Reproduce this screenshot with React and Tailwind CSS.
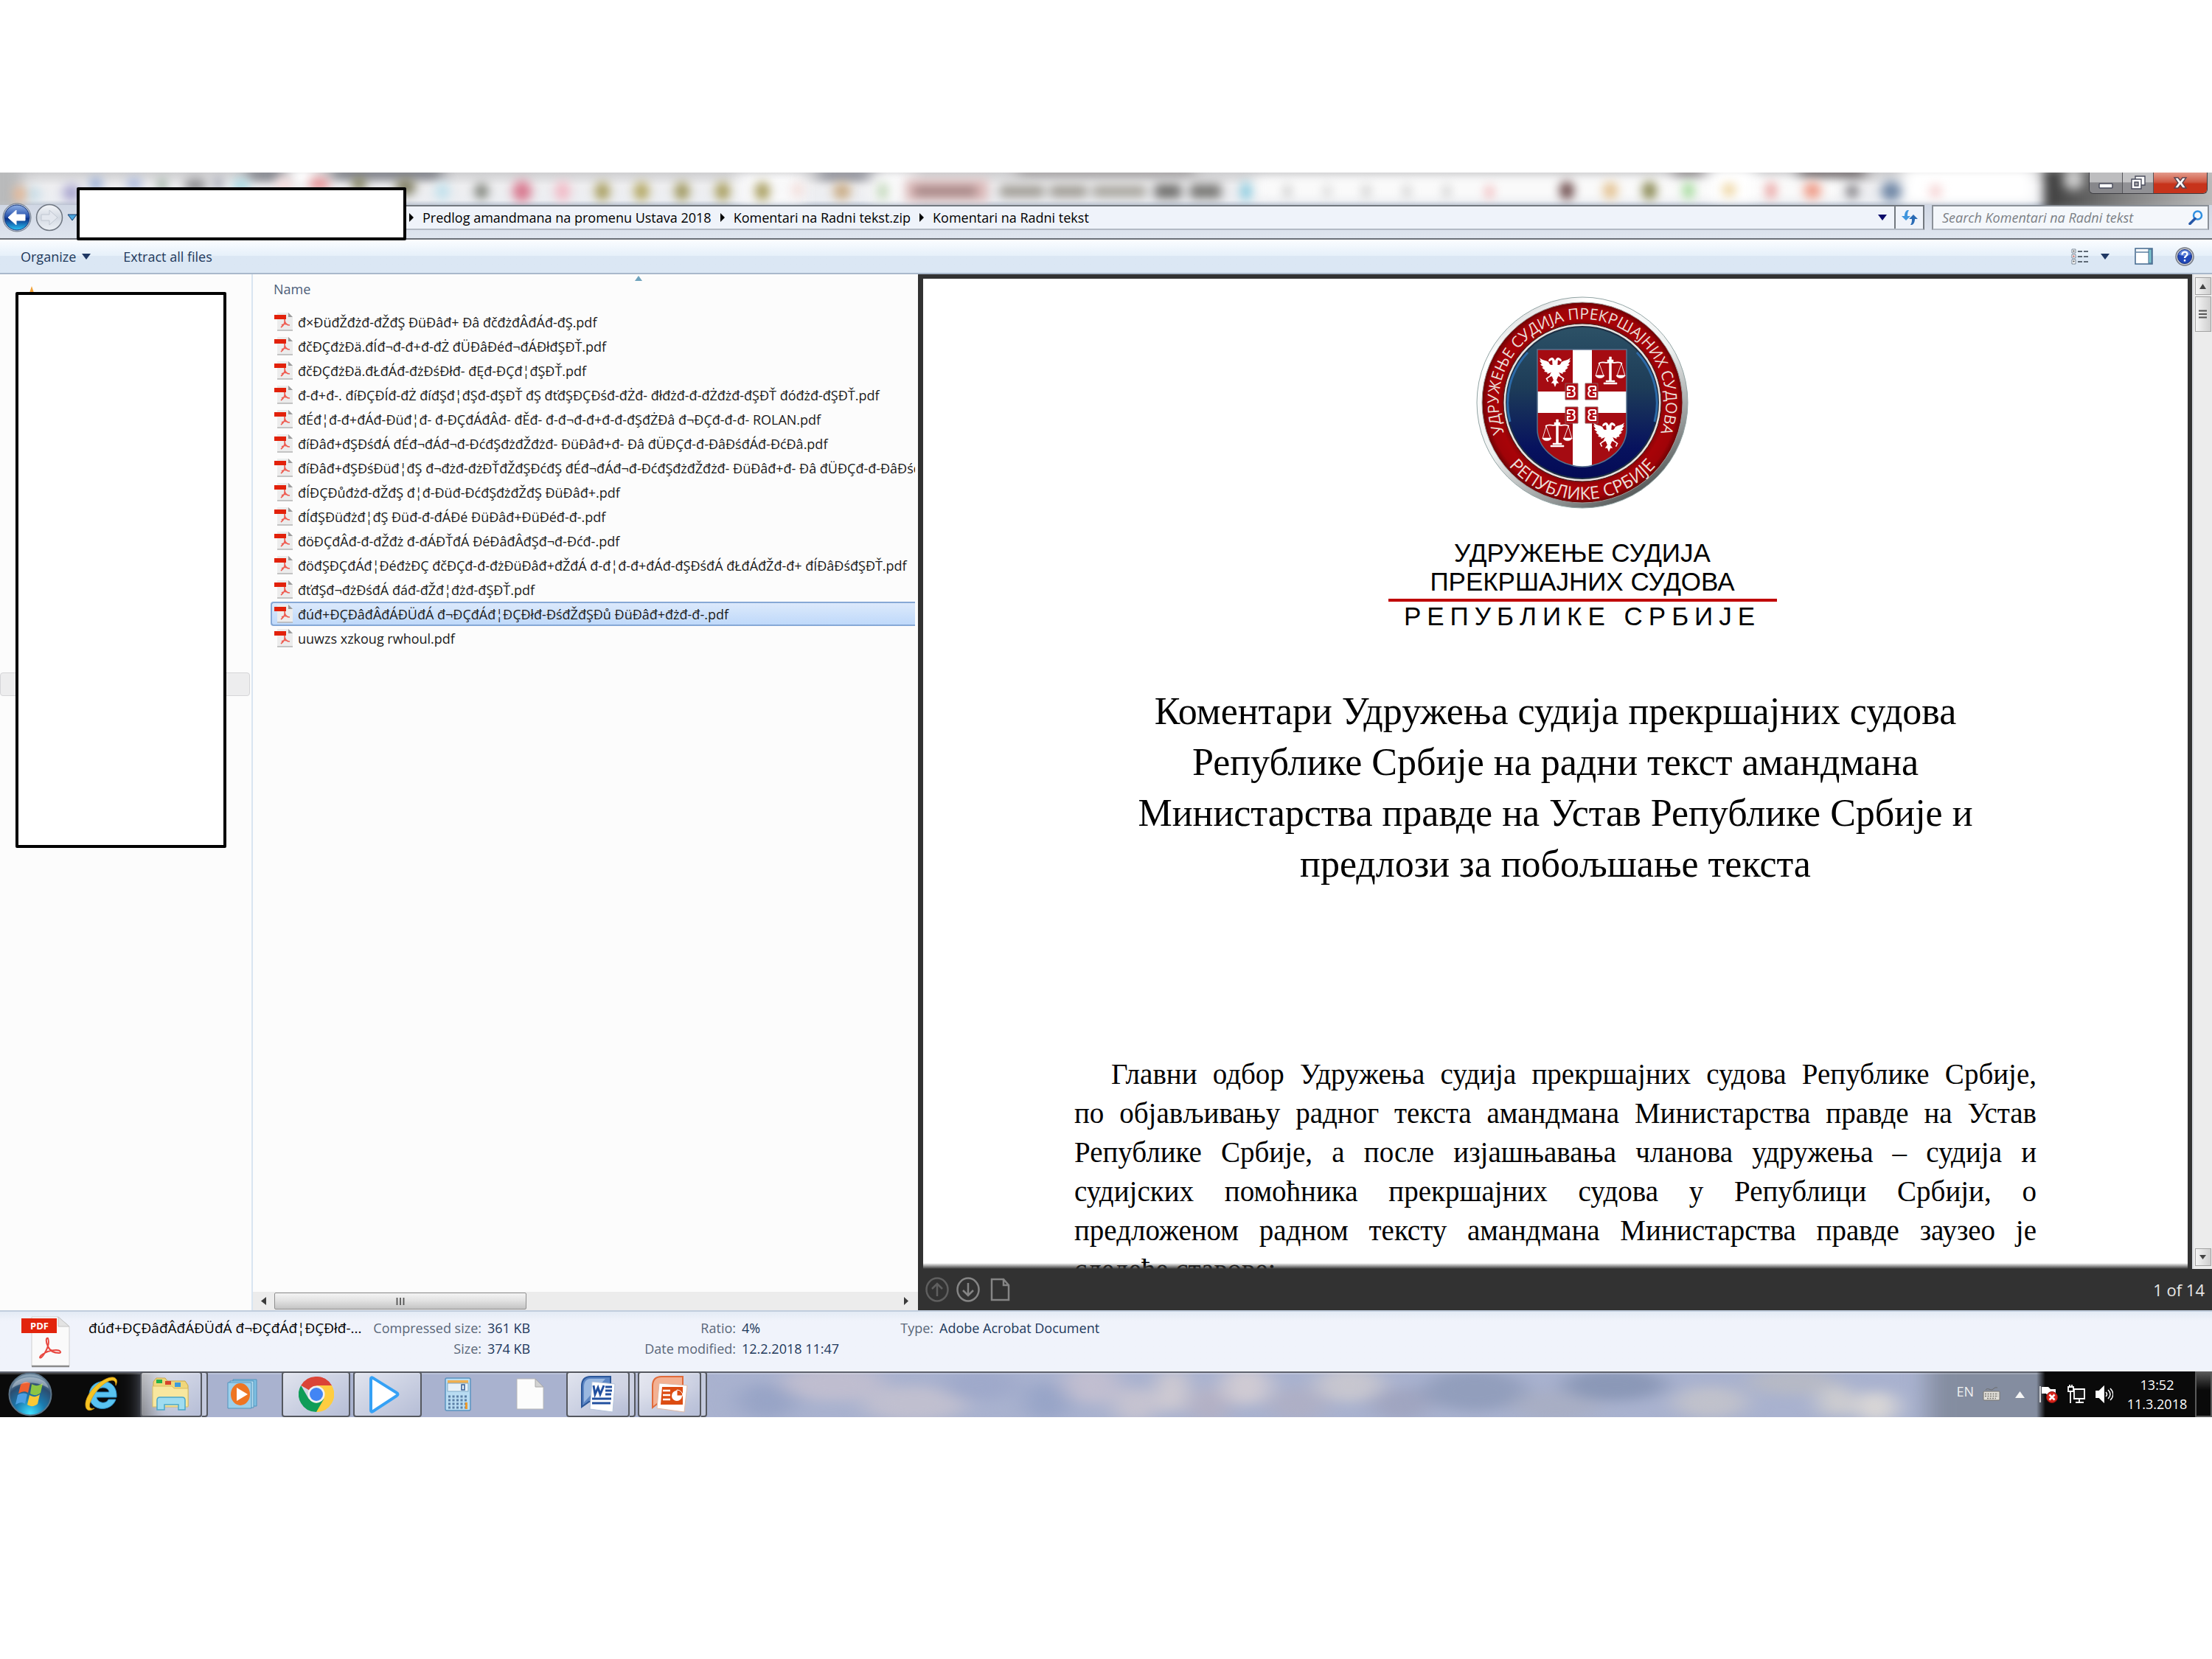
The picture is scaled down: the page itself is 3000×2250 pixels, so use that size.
import { useState } from 'react';

const files = [
  'đ×ĐüđŽđżđ-đŽđŞ ĐüĐâđ+ Đâ đčđżđÂđÁđ-đŞ.pdf',
  'đčĐÇđżĐä.đÍđ¬đ-đ+đ-đŻ đÜĐâĐéđ¬đÁĐłđŞĐŤ.pdf',
  'đčĐÇđżĐä.đŁđÁđ-đżĐśĐłđ- đĘđ-ĐÇđ¦đŞĐŤ.pdf',
  'đ-đ+đ-. đíĐÇĐÍđ-đŻ đíđŞđ¦đŞđ-đŞĐŤ đŞ đťđŞĐÇĐśđ-đŻđ- đłđżđ-đ-đŻđżđ-đŞĐŤ đóđżđ-đŞĐŤ.pdf',
  'đÉđ¦đ-đ+đÁđ-Đüđ¦đ- đ-ĐÇđÁđÂđ- đĚđ- đ-đ¬đ-đ+đ-đ-đŞđŻĐâ đ¬ĐÇđ-đ-đ- ROLAN.pdf',
  'đíĐâđ+đŞĐśđÁ đÉđ¬đÁđ¬đ-ĐćđŞđżđŽđżđ- ĐüĐâđ+đ- Đâ đÜĐÇđ-đ-ĐâĐśđÁđ-ĐćĐâ.pdf',
  'đíĐâđ+đŞĐśĐüđ¦đŞ đ¬đżđ-đżĐŤđŽđŞĐćđŞ đÉđ¬đÁđ¬đ-ĐćđŞđżđŽđżđ- ĐüĐâđ+đ- Đâ đÜĐÇđ-đ-ĐâĐśđÁđ-ĐćĐâ.pdf',
  'đÍĐÇĐůđżđ-đŽđŞ đ¦đ-Đüđ-ĐćđŞđżđŽđŞ ĐüĐâđ+.pdf',
  'đÍđŞĐüđżđ¦đŞ Đüđ-đ-đÁĐé ĐüĐâđ+ĐüĐéđ-đ-.pdf',
  'đöĐÇđÂđ-đ-đŽđż đ-đÁĐŤđÁ ĐéĐâđÂđŞđ¬đ-Đćđ-.pdf',
  'đöđŞĐÇđÁđ¦ĐéđżĐÇ đčĐÇđ-đ-đżĐüĐâđ+đŽđÁ đ-đ¦đ-đ+đÁđ-đŞĐśđÁ đŁđÁđŽđ-đ+ đÍĐâĐśđŞĐŤ.pdf',
  'đťđŞđ¬đżĐśđÁ đáđ-đŽđ¦đżđ-đŞĐŤ.pdf',
  'đúđ+ĐÇĐâđÂđÁĐÜđÁ đ¬ĐÇđÁđ¦ĐÇĐłđ-ĐśđŽđŞĐů ĐüĐâđ+đżđ-đ-.pdf',
  'uuwzs xzkoug rwhoul.pdf',
];

const crumbs = [
  'Predlog amandmana na promenu Ustava 2018',
  'Komentari na Radni tekst.zip',
  'Komentari na Radni tekst',
];

// soft shapes of the window behind the glass: x, y, rx, ry, colour
const blobs = [
  [27, 30, 8, 11, '#e8b48c'], [46, 30, 9, 10, '#c3dbe6'], [97, 28, 12, 12, '#a9a5cf'],
  [130, 16, 9, 9, '#8fa6d2'], [182, 16, 10, 8, '#9fb0da'], [220, 18, 6, 10, '#8fa595'],
  [265, 18, 16, 10, '#8d8d90'], [296, 16, 6, 9, '#8e93a4'], [327, 18, 12, 9, '#a4d8e2'],
  [385, 18, 12, 12, '#f6dede'], [433, 16, 14, 9, '#e78c90'], [487, 16, 10, 10, '#7d7c58'],
  [550, 20, 14, 12, '#7f7d62'], [600, 26, 10, 12, '#bfe0ec'], [653, 26, 9, 11, '#75796f'],
  [708, 26, 13, 15, '#d8798f'], [763, 26, 10, 14, '#f2b8c4'], [817, 26, 10, 13, '#a59a58'],
  [870, 26, 10, 13, '#b0a35a'], [925, 26, 10, 13, '#9c9458'], [980, 26, 10, 13, '#a69b58'],
  [1034, 26, 10, 13, '#a59a58'], [1082, 24, 8, 10, '#f3dcd8'], [1142, 26, 12, 12, '#c9ab84'],
  [1197, 26, 6, 12, '#b3cfa8'], [1690, 26, 7, 13, '#7fc8de'], [1746, 26, 4, 9, '#b5b5b5'],
  [1800, 26, 4, 9, '#c8c8c8'], [1853, 26, 5, 10, '#c6c6c6'], [1908, 26, 4, 9, '#bdbdbd'],
  [1962, 26, 4, 9, '#bdbdbd'], [2020, 27, 5, 9, '#efa5a8'], [2125, 25, 10, 13, '#6c4a4a'],
  [2184, 25, 10, 12, '#e2bf8c'], [2237, 25, 10, 13, '#86854e'], [2290, 25, 8, 12, '#9fd896'],
  [2345, 24, 9, 9, '#ecd096'], [2402, 25, 7, 12, '#e89a98'], [2458, 25, 12, 12, '#ee9a86'],
  [2512, 26, 8, 10, '#77757a'], [2565, 26, 14, 14, '#7188a6'], [2625, 26, 8, 9, '#f4cccc'],
];

function GlassBackdrop() {
  return (
    <svg className="absolute inset-0 w-full h-full" viewBox="0 0 3000 45" preserveAspectRatio="none" aria-hidden="true">
      <defs>
        <filter id="soft" x="-5%" y="-50%" width="110%" height="200%" colorInterpolationFilters="sRGB">
          <feGaussianBlur stdDeviation="7" />
        </filter>
        <filter id="wide" x="-20%" y="-100%" width="140%" height="300%" colorInterpolationFilters="sRGB">
          <feGaussianBlur stdDeviation="10 6" />
        </filter>
        <linearGradient id="glass" x1="0" x2="0" y1="0" y2="1">
          <stop offset="0" stopColor="#cfcfd1" />
          <stop offset="0.4" stopColor="#eeeef0" />
          <stop offset="0.85" stopColor="#eceef2" />
          <stop offset="1" stopColor="#bfc7d4" />
        </linearGradient>
        <linearGradient id="night" x1="0" x2="1">
          <stop offset="0" stopColor="#3c3c3c" />
          <stop offset="0.4" stopColor="#7c7c7c" />
          <stop offset="1" stopColor="#c4c4c4" />
        </linearGradient>
      </defs>
      <rect width="3000" height="45" fill="url(#glass)" />
      <g filter="url(#wide)">
        <rect x="-20" y="-10" width="50" height="60" fill="#b9babb" />
        <rect x="335" y="-10" width="50" height="22" fill="#8b8d94" />
        <rect x="450" y="-10" width="150" height="20" fill="#85878e" />
        <rect x="1110" y="-10" width="80" height="22" fill="#9a9ba3" />
        <rect x="1380" y="-10" width="240" height="16" fill="#a8a5a6" />
        <rect x="390" y="-4" width="40" height="20" fill="#ffffff" />
        <rect x="1000" y="2" width="90" height="40" fill="#f9f9fa" />
        <rect x="1180" y="0" width="60" height="40" fill="#f9f9fa" />
        <rect x="1700" y="6" width="800" height="30" fill="#fafafa" />
        <rect x="2270" y="-10" width="40" height="18" fill="#9a9698" />
        <rect x="2320" y="-4" width="60" height="44" fill="#ffffff" />
        <rect x="2580" y="-4" width="180" height="44" fill="#ffffff" />
        <rect x="2440" y="-10" width="90" height="18" fill="#7c7678" />
      </g>
      <g filter="url(#soft)">
        <rect x="1228" y="10" width="112" height="30" fill="#dcb9b8" />
        <rect x="1240" y="20" width="84" height="12" fill="#9a7c7c" />
        <rect x="1356" y="18" width="60" height="16" fill="#9c9890" />
        <rect x="1424" y="18" width="50" height="16" fill="#9c9890" />
        <rect x="1482" y="18" width="72" height="16" fill="#a5a29a" />
        <rect x="1566" y="16" width="36" height="20" fill="#6f6e6c" />
        <rect x="1614" y="16" width="42" height="20" fill="#777673" />
        {blobs.map(([cx, cy, rx, ry, fill]) => (
          <ellipse key={cx} cx={cx} cy={cy} rx={rx} ry={ry} fill={fill} />
        ))}
        <rect x="2772" y="-6" width="250" height="60" fill="url(#night)" />
        <ellipse cx="2812" cy="10" rx="14" ry="14" fill="#cccccc" />
      </g>
    </svg>
  );
}

function Caret({ className = 'fill-[#1f3864]' }) {
  return (
    <svg width="12" height="8" viewBox="0 0 12 8" className={className} aria-hidden="true">
      <path d="M0 0h12L6 8z" />
    </svg>
  );
}

function CaptionButtons() {
  return (
    <div className="relative ml-auto mr-1.5 h-[29px] w-[161px] flex rounded-b-md border border-t-0 border-[#3d3d42] overflow-hidden">
      <button type="button" aria-label="Minimize" className="w-[45px] border-r border-[#55555a] bg-linear-to-b from-[#bdbdbf] from-45% to-[#87878b] to-50% flex items-center justify-center">
        <svg width="20" height="8" viewBox="0 0 20 8" className="mt-2"><rect x="1" y="1" width="18" height="6" rx="1" fill="#fff" stroke="#4a4c5c" strokeWidth="1.5" /></svg>
      </button>
      <button type="button" aria-label="Restore" className="w-[42px] border-r border-[#55555a] bg-linear-to-b from-[#c4c4c6] from-45% to-[#919195] to-50% flex items-center justify-center">
        <svg width="20" height="20" viewBox="0 0 20 20" fill="#fff" stroke="#4a4c5c" strokeWidth="1.4">
          <path d="M6 1h13v12H6z" />
          <path d="M1 5h13v13H1z" />
          <path d="M5 9h5v5H5z" fill="#a5a5aa" />
        </svg>
      </button>
      <button type="button" aria-label="Close" className="flex-1 bg-linear-to-b from-[#e39a8b] via-[#cf5a45] via-45% to-[#c7331b] to-55% flex items-center justify-center">
        <svg width="20" height="18" viewBox="0 0 20 18">
          <path d="M2 2h5l3 4 3-4h5l-5 7 5 7h-5l-3-4-3 4H2l5-7z" fill="#fff" stroke="#5b4550" strokeWidth="1.4" />
        </svg>
      </button>
    </div>
  );
}

function NavButtons() {
  return (
    <div className="h-[34px] flex items-center gap-[5px] pl-[3px]">
      <button type="button" aria-label="Back">
        <svg width="40" height="40" viewBox="0 0 40 40">
          <defs>
            <linearGradient id="back" x1="0" x2="0" y1="0" y2="1">
              <stop offset="0" stopColor="#8fb0e6" />
              <stop offset="0.48" stopColor="#2450ab" />
              <stop offset="0.55" stopColor="#0c3189" />
              <stop offset="1" stopColor="#27c3f5" />
            </linearGradient>
          </defs>
          <circle cx="20" cy="20" r="19" fill="#b7c3d6" stroke="#6e7886" />
          <circle cx="20" cy="20" r="17" fill="url(#back)" stroke="#1c3a7c" />
          <path d="M8 20l11-10v6h12v8H19v6z" fill="#fff" stroke="#fff" strokeLinejoin="round" strokeWidth="1" />
        </svg>
      </button>
      <button type="button" aria-label="Forward">
        <svg width="38" height="38" viewBox="0 0 38 38">
          <defs>
            <linearGradient id="forward" x1="0" x2="0" y1="0" y2="1">
              <stop offset="0" stopColor="#f4f6f9" />
              <stop offset="0.5" stopColor="#d3d9e2" />
              <stop offset="1" stopColor="#edf1f6" />
            </linearGradient>
          </defs>
          <circle cx="19" cy="19" r="17.5" fill="url(#forward)" stroke="#6f7681" strokeWidth="1.5" />
          <path d="M30 19L19 9v6H8v8h11v6z" fill="#e3e7ee" stroke="#c0c7d1" />
        </svg>
      </button>
      <button type="button" aria-label="Recent pages">
        <svg width="14" height="10" viewBox="0 0 14 10"><path d="M1 1h12L7 9z" fill="#49a5de" stroke="#173f70" /></svg>
      </button>
    </div>
  );
}

function AddressRow() {
  return (
    <div className="relative h-[47px] pr-1 flex items-start bg-linear-to-b from-[#d0d7e4] to-[#dfe5ef] border-b-2 border-[#6c7078]">
      <NavButtons />
      <nav className="ml-1 h-[34px] flex-1 flex items-stretch bg-[#eff3fa] border-2 border-[#72787f] border-b-[#b3bac4]" aria-label="Address">
        <ol className="flex-1 pl-[444px] flex items-center text-black">
          {crumbs.map((crumb) => (
            <li key={crumb} className="flex items-center">
              <svg width="6" height="12" viewBox="0 0 6 12" className="mr-3" aria-hidden="true"><path d="M0 0l6 6-6 6z" /></svg>
              <a href="#" className="mr-3">{crumb}</a>
            </li>
          ))}
        </ol>
        <button type="button" aria-label="Previous locations" className="w-8 flex items-center justify-center">
          <Caret className="fill-[#0a0a6a]" />
        </button>
        <button type="button" aria-label="Refresh" className="w-[39px] border-l-2 border-[#72787f] flex items-center justify-center">
          <svg width="24" height="22" viewBox="0 0 24 22">
            <path d="M9 1C6 2 5 6 5 9H1l6 6 6-6H9c0-3 0-5 2-8z" fill="#3f95dd" />
            <path d="M15 21c3-1 4-5 4-8h4l-6-6-6 6h4c0 3 0 5-2 8z" fill="#2a6bb5" />
          </svg>
        </button>
      </nav>
      <label className="ml-2.5 h-[34px] w-[376px] pl-3 pr-1.5 flex items-center bg-[#f4f7fb] border-2 border-[#8b9199] border-b-[#b3bac4]">
        <input type="search" aria-label="Search" placeholder="Search Komentari na Radni tekst" className="flex-1 min-w-0 italic outline-none placeholder:text-[#7b7f85] placeholder:opacity-100" />
        <svg width="20" height="20" viewBox="0 0 20 20" fill="none" aria-hidden="true">
          <circle cx="12.500" cy="7" r="5.500" stroke="#2f8fe0" strokeWidth="2.500" />
          <path d="M9 11.500L2 18.500" stroke="#2557a8" strokeWidth="3.500" strokeLinecap="round" />
        </svg>
      </label>
    </div>
  );
}

function CommandBar() {
  return (
    <div className="h-[47px] px-7 flex items-center text-[#1e395b] bg-linear-to-b from-[#fbfdff] via-[#e6f0fa] via-48% to-[#dbe7f4] to-50% border-b-2 border-[#a9b8cb]">
      <button type="button" className="flex items-center gap-2">Organize <Caret /></button>
      <button type="button" className="ml-11">Extract all files</button>
      <div className="ml-auto flex items-center">
        <button type="button" aria-label="Change your view">
          <svg width="24" height="22" viewBox="0 0 24 22" fill="none" stroke="#7a8796">
            <path d="M1 1h5v5H1zM1 8h5v5H1zM1 15h5v6H1z" fill="#fff" />
            <path d="M9 4h6M17 4h6M9 11h6M17 11h6M9 18h6M17 18h6" stroke="#5f6a76" strokeWidth="2" />
            <path d="M3 3h1v1H3zM3 17h1v1H3z" stroke="#444" />
            <path d="M3 10h1v1H3z" stroke="#b33" />
          </svg>
        </button>
        <button type="button" aria-label="More view options" className="ml-4"><Caret /></button>
        <button type="button" aria-label="Preview pane" className="ml-[34px]">
          <svg width="25" height="23" viewBox="0 0 25 23">
            <rect x="1" y="1" width="23" height="21" fill="#fff" stroke="#41678c" strokeWidth="1.500" />
            <path d="M2 6h17" stroke="#5d7fa0" strokeWidth="1.500" />
            <rect x="19" y="2" width="4" height="19" fill="#7cc5cf" stroke="#41678c" />
          </svg>
        </button>
        <button type="button" aria-label="Help" className="ml-[30px] -mr-1">
          <svg width="26" height="26" viewBox="0 0 26 26">
            <circle cx="13" cy="13" r="12" fill="#c9ccd2" stroke="#777b84" strokeWidth="1.500" />
            <circle cx="13" cy="13" r="9.500" fill="#1f47b8" stroke="#18307d" />
            <path d="M4.500 10a9 9 0 0 1 17 0c-5 3-12 3-17 0z" fill="#5b80da" />
            <path d="M9.500 10.500c0-5 7-5 7-1 0 3-3.500 2.500-3.500 5.500M13 17v2.500" fill="none" stroke="#fff" strokeWidth="2.400" />
          </svg>
        </button>
      </div>
    </div>
  );
}

function PdfIcon() {
  return (
    <svg width="26" height="25" viewBox="0 0 26 25" className="shrink-0" aria-hidden="true">
      <path d="M4 0h15l6 6v18H4z" fill="#ececec" />
      <path d="M19 0l6 6h-6z" fill="#9a9a9a" />
      <path d="M4 24h21" stroke="#b5b5b5" strokeWidth="1.500" />
      <path d="M0 3h16v6H0z" fill="#e2210a" />
      <path d="M14 9c1 5-2 9-5 11M14 9c0 5 3 8 7 8M10 17c3-2 6-2 9 0" fill="none" stroke="#ee5b50" strokeWidth="1.600" />
    </svg>
  );
}

function NavigationPane() {
  return (
    <aside className="relative w-[343px] shrink-0 border-r-2 border-[#d9e5f1] bg-[#fcfcfc]">
      <svg width="16" height="15" viewBox="0 0 16 15" className="ml-[35px] mt-4" aria-hidden="true">
        <path d="M8 0l4 12H4z" fill="#f2a33a" />
      </svg>
      <div className="absolute inset-x-0 top-[540px] h-8 mr-0.5 border border-[#d5d5d8] rounded-sm bg-[#ededee]"></div>
      <div className="absolute left-[21px] top-6 w-[286px] h-[754px] border-4 border-black rounded-xs bg-white"></div>
    </aside>
  );
}

function FileList() {
  const [selected, setSelected] = useState(12);

  return (
    <section className="flex-1 min-w-0 flex flex-col bg-[#fcfcfc]">
      <div className="relative flex-1 pl-6 pr-1 overflow-hidden">
        <svg width="10" height="7" viewBox="0 0 10 7" className="absolute left-[518px] top-0.5" aria-hidden="true">
          <path d="M0 7l5-7 5 7z" fill="#6fa3bd" />
        </svg>
        <table className="w-full table-fixed border-separate border-spacing-0">
          <thead>
            <tr>
              <th className="h-12 pl-1 pb-2 text-left align-middle font-normal text-[#4c607a]">Name</th>
            </tr>
          </thead>
          <tbody>
            {files.map((name, i) => (
              <tr key={name} onClick={() => setSelected(i)}>
                <td className="p-0">
                  <div
                    className={`h-[33px] pl-[3px] flex items-center gap-1.5 overflow-hidden whitespace-nowrap border-2 border-r-0 rounded-l-sm text-[#1a1a1a] ${
                      i === selected
                        ? 'border-[#86a8d6] bg-linear-to-b from-[#dce9fb] to-[#bfd9fa]'
                        : 'border-transparent'
                    }`}
                  >
                    <PdfIcon />
                    {name}
                  </div>
                </td>
              </tr>
            ))}
          </tbody>
        </table>
      </div>
      <div className="h-[25px] pl-[3px] pr-2 flex items-center bg-[#ececec]">
        <button type="button" aria-label="Scroll left" className="mr-1 w-[22px] flex justify-center">
          <svg width="7" height="11" viewBox="0 0 7 11"><path d="M7 0v11L0 5.500z" fill="#3b3b3b" /></svg>
        </button>
        <div className="h-[23px] w-[342px] flex items-center justify-center border border-[#8f8f8f] rounded-xs bg-linear-to-b from-[#f4f4f4] via-[#e3e3e3] via-45% to-[#c4c4c4]">
          <svg width="12" height="10" viewBox="0 0 12 10"><path d="M1.500 0v10M6 0v10M10.500 0v10" stroke="#555" strokeWidth="1.800" /></svg>
        </div>
        <button type="button" aria-label="Scroll right" className="ml-auto w-4 flex justify-center">
          <svg width="6" height="11" viewBox="0 0 6 11"><path d="M0 0v11l6-5.500z" fill="#3b3b3b" /></svg>
        </button>
      </div>
    </section>
  );
}

function Eagle() {
  return (
    <g fill="#fff">
      <path d="M17 12c-1-3 0-5-1-6l-4 2c-1-2 0-4 3-5 2-1 4 1 5 4 1-3 3-5 5-4 3 1 4 3 3 5l-4-2c-1 1 0 3-1 6 2 1 4 0 5-3 3-3 8-2 12-6-1 2-1 3-2 4h2l-3 4 2 1-4 3 2 1-4 3 1 2-4 1v2l-5-2 3 6-4-1-2 5 3 4h-3l-2 5-2-5h-3l3-4-2-5-4 1 3-6-5 2v-2l-4-1 1-2-4-3 2-1-4-3 2-1-3-4h2C1 6 1 5 0 3c4 4 9 3 12 6 1 3 3 4 5 3z" />
      <path d="M13 27l-4 3 2 4M27 27l4 3-2 4" fill="none" stroke="#fff" strokeWidth="1.500" />
    </g>
  );
}

function Scales() {
  return (
    <g fill="#fff" stroke="#fff">
      <path d="M18.500 2h3v32h-3zM16 6h8v3h-8zM14 34h12v2H14zM11 37h18v2H11z" strokeWidth="0.500" />
      <path d="M4 11c6-4 10 1 16-2 6 3 10-2 16 2" fill="none" strokeWidth="1.800" />
      <path d="M5 11L0 28M5 11l6 17M35 11l-6 17M35 11l5 17" fill="none" strokeWidth="0.900" />
      <path d="M0 27h12c-1 5-11 5-12 0zM28 27h12c-1 5-11 5-12 0z" strokeWidth="0.500" />
    </g>
  );
}

function FireSteel() {
  return (
    <g>
      <path d="M0 0h17v22H0z" fill="#b00c14" stroke="#8c5a5a" />
      <path d="M14 4H8c-5 0-4 6 0 6-5 0-5 8 0 8h6v-5h-4M14 4v5h-4" fill="none" stroke="#fff" strokeWidth="2.200" />
    </g>
  );
}

function Seal() {
  return (
    <svg width="300" height="300" viewBox="0 0 300 300" role="img" aria-label="Грб удружења">
      <defs>
        <linearGradient id="rim" x1="0.2" y1="0" x2="0.8" y2="1">
          <stop offset="0" stopColor="#c9cbcd" />
          <stop offset="0.15" stopColor="#ffffff" />
          <stop offset="0.5" stopColor="#eef0f0" />
          <stop offset="0.8" stopColor="#8d9191" />
          <stop offset="1" stopColor="#3c4040" />
        </linearGradient>
        <linearGradient id="field" x1="0" x2="0" y1="0" y2="1">
          <stop offset="0" stopColor="#2c5166" />
          <stop offset="0.4" stopColor="#1d3c58" />
          <stop offset="0.8" stopColor="#07125e" />
          <stop offset="1" stopColor="#040a55" />
        </linearGradient>
        <radialGradient id="band">
          <stop offset="0.76" stopColor="#7d0507" />
          <stop offset="0.84" stopColor="#a80308" />
          <stop offset="0.94" stopColor="#a00308" />
          <stop offset="1" stopColor="#6c0204" />
        </radialGradient>
        <clipPath id="shield">
          <path d="M89 78h121v108c0 26-24 44-46 49-5 2-9 2-14 2s-9 0-14-2c-22-5-47-23-47-49z" />
        </clipPath>
        <path id="arcTop" d="M44 191a113.500 113.500 0 1 1 212 0" />
        <path id="arcBottom" d="M44 228a131.500 131.500 0 0 0 212 0" />
      </defs>
      <circle cx="150" cy="150" r="143" fill="url(#rim)" stroke="#93a5a5" />
      <circle cx="150" cy="150" r="136" fill="url(#band)" stroke="#9c9a98" />
      <circle cx="150" cy="150" r="107" fill="#e8e2de" stroke="#3f2020" />
      <circle cx="150" cy="150" r="103" fill="url(#field)" stroke="#1d2f44" strokeWidth="2" />
      <path d="M52 176a100 100 0 0 1 24-94M224 82a100 100 0 0 1 24 94" fill="none" stroke="#2c6aa8" strokeWidth="3" />
      <g clipPath="url(#shield)">
        <rect x="85" y="74" width="130" height="170" fill="#a50b12" />
        <path d="M137 74h26v170h-26z" fill="#fff" />
        <path d="M85 135h130v29H85z" fill="#fff" />
      </g>
      <path d="M89 78h121v108c0 26-24 44-46 49-5 2-9 2-14 2s-9 0-14-2c-22-5-47-23-47-49z" fill="none" stroke="#57708c" strokeWidth="1.500" />
      <g transform="translate(92 86) scale(1.050)"><Eagle /></g>
      <g transform="translate(168 86)"><Scales /></g>
      <g transform="translate(96 171)"><Scales /></g>
      <g transform="translate(165 174) scale(1.050)"><Eagle /></g>
      <g transform="translate(144 124) scale(-1 1)"><FireSteel /></g>
      <g transform="translate(154 124)"><FireSteel /></g>
      <g transform="translate(144 156) scale(-1 1)"><FireSteel /></g>
      <g transform="translate(154 156)"><FireSteel /></g>
      <g fill="#eadfd8" className="font-['Open_Sans',sans-serif]">
        <text textAnchor="middle" className="text-[21px]"><textPath href="#arcTop" startOffset="50%">УДРУЖЕЊЕ СУДИЈА ПРЕКРШАЈНИХ СУДОВА</textPath></text>
        <text textAnchor="middle" className="text-[24px]"><textPath href="#arcBottom" startOffset="50%">РЕПУБЛИКЕ СРБИЈЕ</textPath></text>
      </g>
    </svg>
  );
}

function PreviewPane() {
  return (
    <section className="w-[1755px] shrink-0 flex flex-col bg-[#323232]">
      <div className="flex-1 min-h-0 flex">
        <article className="relative flex-1 min-w-0 mt-1.5 ml-[7px] overflow-hidden bg-white text-black">
          <header className="pt-[18px] pl-[73px] flex flex-col items-center font-['Liberation_Sans',sans-serif] text-[35px] leading-[39px]">
            <Seal />
            <p className="mt-[34px] text-center">УДРУЖЕЊЕ СУДИЈА<br />ПРЕКРШАЈНИХ СУДОВА</p>
            <p className="mt-1 w-[527px] border-t-4 border-[#c00000] text-center tracking-[8px]">РЕПУБЛИКЕ СРБИЈЕ</p>
          </header>
          <h1 className="mt-[75px] mx-auto w-[1200px] text-center font-['Liberation_Serif',serif] text-[52px] leading-[69px]">
            Коментари Удружења судија прекршајних судова Републике Србије на радни текст амандмана
            Министарства правде на Устав Републике Србије и предлози за побољшање текста
          </h1>
          <p className="mt-[224px] mx-auto w-[1305px] indent-[50px] text-justify font-['Liberation_Serif',serif] text-[39px] leading-[53px]">
            Главни одбор Удружења судија прекршајних судова Републике Србије, по&nbsp;објављивању радног
            текста амандмана Министарства правде на Устав Републике Србије, а после изјашњавања чланова
            удружења – судија и судијских помоћника прекршајних судова у Републици Србији, о предложеном
            радном тексту амандмана Министарства правде заузео је следеће ставове:
          </p>
          <div className="absolute inset-x-0 bottom-0 h-2 bg-linear-to-b from-transparent to-[#323232]"></div>
        </article>
        <div className="ml-[6px] w-[27px] flex flex-col items-center py-1 border-l-2 border-[#d9dce0] bg-[#ececec]">
          <button type="button" aria-label="Scroll up" className="w-[22px] h-[24px] flex items-center justify-center border border-[#a3a3a3] bg-linear-to-r from-[#f5f5f5] to-[#cfcfcf]">
            <svg width="9" height="7" viewBox="0 0 9 7"><path d="M0 7l4.500-7L9 7z" fill="#444" /></svg>
          </button>
          <div className="mt-0.5 w-[22px] h-[48px] flex items-center justify-center border border-[#a3a3a3] bg-linear-to-r from-[#f5f5f5] to-[#cfcfcf]">
            <svg width="11" height="12" viewBox="0 0 11 12"><path d="M0 1.500h11M0 6h11M0 10.500h11" stroke="#555" strokeWidth="1.800" /></svg>
          </div>
          <button type="button" aria-label="Scroll down" className="mt-auto w-[22px] h-[24px] flex items-center justify-center border border-[#a3a3a3] bg-linear-to-r from-[#f5f5f5] to-[#cfcfcf]">
            <svg width="9" height="6" viewBox="0 0 9 6"><path d="M0 0l4.500 6L9 0z" fill="#444" /></svg>
          </button>
        </div>
      </div>
      <div className="h-[56px] px-2.5 flex items-center gap-2.5">
        <button type="button" aria-label="Previous page">
          <svg width="32" height="34" viewBox="0 0 32 34" fill="none" stroke="#5f5f5f" strokeWidth="2.500">
            <ellipse cx="16" cy="17" rx="14.500" ry="15.500" />
            <path d="M16 26V9M9 16l7-7 7 7" />
          </svg>
        </button>
        <button type="button" aria-label="Next page">
          <svg width="32" height="34" viewBox="0 0 32 34" fill="none" stroke="#858585" strokeWidth="2.500">
            <ellipse cx="16" cy="17" rx="14.500" ry="15.500" />
            <path d="M16 8v17M9 18l7 7 7-7" />
          </svg>
        </button>
        <button type="button" aria-label="Page view" className="ml-1">
          <svg width="27" height="32" viewBox="0 0 27 32" fill="none" stroke="#858585" strokeWidth="2.500">
            <path d="M2 2h16l7 8v20H2zM18 2v8h7" />
          </svg>
        </button>
        <span className="ml-auto text-[22px] text-[#e6e6e6]">1 of 14</span>
      </div>
    </section>
  );
}

function DetailsPane() {
  return (
    <footer className="h-[83px] pl-7 flex items-start border-t-2 border-[#c0cddd] bg-linear-to-b from-[#e3ebf5] to-[#f0f3fb] to-15%">
      <svg width="68" height="70" viewBox="0 0 68 70" className="mt-1.5" aria-hidden="true">
        <path d="M15 1h36l15 13v54H15z" fill="#fafafa" stroke="#cfcfcf" />
        <path d="M51 1l15 13H51z" fill="#e3e3e3" stroke="#c4c4c4" />
        <path d="M15 68h51" stroke="#8a8a8a" strokeWidth="2.500" />
        <path d="M1 3h48v20H1z" fill="#e2240c" />
        <path d="M37 30c-3-1-3 5 0 11 3 7 9 9 15 9 4 0 2-4-4-4-8 0-15 3-20 7-4 4-1 5 2 1 5-7 10-16 7-24z" fill="none" stroke="#e8473f" strokeWidth="2" />
        <text x="13" y="18" fill="#fff" className="font-['Open_Sans',sans-serif] text-[13px] font-bold">PDF</text>
      </svg>
      <p className="ml-6 mt-2 w-[385px] text-[19px] leading-[28px] whitespace-nowrap text-black">đúđ+ĐÇĐâđÂđÁĐÜđÁ đ¬ĐÇđÁđ¦ĐÇĐłđ-...</p>
      <dl className="mt-2 grid grid-cols-[148px_60px_269px_130px_122px_auto] gap-x-2 leading-[28px] whitespace-nowrap text-[#1e395b] [&>dt]:text-right [&>dt]:text-[#5a6779]">
        <dt>Compressed size:</dt><dd>361 KB</dd>
        <dt>Ratio:</dt><dd>4%</dd>
        <dt>Type:</dt><dd>Adobe Acrobat Document</dd>
        <dt>Size:</dt><dd>374 KB</dd>
        <dt>Date modified:</dt><dd>12.2.2018 11:47</dd>
      </dl>
    </footer>
  );
}

function StartOrb() {
  return (
    <svg width="60" height="60" viewBox="0 0 60 60">
      <defs>
        <radialGradient id="orb" cx="0.5" cy="0.95" r="0.9">
          <stop offset="0" stopColor="#3fe0ff" />
          <stop offset="0.4" stopColor="#1b7bb0" />
          <stop offset="0.75" stopColor="#2b4d70" />
          <stop offset="1" stopColor="#8aa2b5" />
        </radialGradient>
      </defs>
      <circle cx="30" cy="30" r="28.500" fill="url(#orb)" stroke="#5c7488" strokeWidth="2" />
      <path d="M17 17c4-4 8-5 13-2l-3 13c-4-3-8-2-13 1z" fill="#ee6030" />
      <path d="M32 16c5 3 9 3 15-1l-3 13c-5 4-9 4-14 1z" fill="#8cc544" />
      <path d="M13 31c5-3 9-3 13-1l-3 13c-4-3-8-2-13 1z" fill="#4b9fe3" />
      <path d="M29 31c5 3 9 3 14-1l-3 13c-5 4-9 4-14 1z" fill="#fbc834" />
      <path d="M5 22C9 2 51 2 55 22 42 12 18 12 5 22z" fill="#fff" opacity="0.350" />
    </svg>
  );
}

function IeIcon() {
  return (
    <svg width="48" height="50" viewBox="0 0 48 50">
      <path d="M44 29H17c1 8 13 10 16 3h10c-6 18-36 17-36-6C7 2 46 0 44 29zM17 22h17c-1-8-15-8-17 0z" fill="#59c3f0" stroke="#2b8fc9" />
      <path d="M43 13C48 2 39-1 28 5 12 13-2 33 3 44c2 4 7 3 11 0-8 2-8-4-4-12C17 17 31 6 38 6c4 0 5 3 5 7z" fill="#f6c322" stroke="#d49a10" strokeWidth="0.800" />
    </svg>
  );
}

function FolderIcon() {
  return (
    <svg width="52" height="50" viewBox="0 0 52 50">
      <path d="M2 8l4-5h12l3 4h24l4 6v28H2z" fill="#f0d67a" stroke="#c9a748" />
      <path d="M6 5h8v5H6z" fill="#21b24b" /><path d="M18 7h8v5h-8z" fill="#d8432a" /><path d="M31 9h8v6h-8z" fill="#3a9bdc" />
      <path d="M1 14h26l3 3h19v25H1z" fill="#f8e79f" stroke="#d9bd63" />
      <path d="M7 46V33c0-3 1-4 4-4h30c3 0 4 1 4 4v13h-9v-7H17v7z" fill="#9fdcf0" stroke="#4ba6c8" strokeWidth="1.500" />
    </svg>
  );
}

function MediaIcon() {
  return (
    <svg width="48" height="42" viewBox="0 0 48 42">
      <path d="M8 1h32v36H8z" fill="#7fc0e2" stroke="#4f93bd" />
      <path d="M4 3h32v36H4z" fill="#b5dcef" stroke="#4f93bd" />
      <path d="M1 5h32v35H1z" fill="#9ccfea" stroke="#4f93bd" />
      <ellipse cx="18" cy="21" rx="13" ry="15" fill="#ee7522" />
      <path d="M13 12l15 9-15 9z" fill="#fff" />
    </svg>
  );
}

function ChromeIcon() {
  return (
    <svg width="48" height="48" viewBox="0 0 48 48">
      <path d="M24 24L3.200 12A24 24 0 0 1 44.800 12z" fill="#db4437" />
      <path d="M24 24V0a24 24 0 0 1 20.800 12H24z" fill="#db4437" />
      <path d="M24 24l20.800-12A24 24 0 0 1 24 48z" fill="#ffcd40" />
      <path d="M24 12h20.800A24 24 0 0 1 24 48l10.400-18z" fill="#ffcd40" />
      <path d="M3.200 12A24 24 0 0 0 24 48l10.400-18-10.400 6-10.400-6z" fill="#0f9d58" />
      <circle cx="24" cy="24" r="11.500" fill="#f1f1f1" />
      <circle cx="24" cy="24" r="9" fill="#4285f4" />
    </svg>
  );
}

function PlayIcon() {
  return (
    <svg width="50" height="52" viewBox="0 0 50 52">
      <path d="M2 5c0-2 1-2 3-1l32 20c2 1 2 3 0 4L5 49c-2 1-3 1-3-1z" fill="#fff" stroke="#35a1f5" strokeWidth="4" />
    </svg>
  );
}

function CalculatorIcon() {
  return (
    <svg width="36" height="46" viewBox="0 0 36 46">
      <rect x="1" y="1" width="34" height="44" rx="2" fill="#b9dcf2" stroke="#5b93c0" strokeWidth="1.500" />
      <rect x="4" y="4" width="28" height="4" fill="#f0b050" />
      <rect x="4" y="8" width="28" height="11" fill="#e7f1f8" stroke="#7fa8c6" />
      <path d="M23 10h4v7h-4z" fill="none" stroke="#345c94" strokeWidth="1.500" />
      <path d="M5 26h26M5 31h26M5 36h26M5 41h26" stroke="#5b7fa6" strokeWidth="3" strokeDasharray="3 2.500" />
      <path d="M28 34h3v9h-3z" fill="#ee9a2c" />
    </svg>
  );
}

function PageIcon() {
  return (
    <svg width="38" height="44" viewBox="0 0 38 44">
      <path d="M1 1h25l11 11v30H1z" fill="#fcfcfc" stroke="#b7b7b7" />
      <path d="M26 1v11h11z" fill="#d2d2d2" stroke="#a8a8a8" />
    </svg>
  );
}

function WordIcon() {
  return (
    <svg width="48" height="50" viewBox="0 0 48 50">
      <path d="M2 42V14C2 5 6 1 14 1h27v34H12z" fill="#5c86c4" stroke="#2a5699" strokeWidth="2" />
      <path d="M5 36V15c0-7 3-11 9-11h20z" fill="#b5cdec" opacity="0.700" />
      <path d="M16 8l31 3-3 38-31-4z" fill="#fff" stroke="#b3c3da" />
      <path d="M18 13l2 12 4-9 3 9 5-12" fill="none" stroke="#22509f" strokeWidth="3" />
      <path d="M34 15h9M34 20h9M34 25h8M16 31h26M16 37h25" stroke="#22509f" strokeWidth="3" />
    </svg>
  );
}

function PowerPointIcon() {
  return (
    <svg width="50" height="50" viewBox="0 0 50 50">
      <path d="M2 43V14C2 5 6 1 14 1h29v34H12z" fill="#f3b193" stroke="#e06a3a" strokeWidth="2" />
      <path d="M11 10l38 3-4 36-37-5z" fill="#fff" stroke="#e0b8a5" />
      <path d="M15 15h28v24H13z" fill="#dc4c12" />
      <path d="M16 20h10M16 26h10M16 32h10" stroke="#fff" strokeWidth="2.500" />
      <circle cx="35" cy="27" r="7" fill="#fff" />
      <path d="M35 27v-8a8 8 0 0 1 8 8z" fill="#dc4c12" stroke="#fff" />
    </svg>
  );
}

const taskButton = 'h-full flex items-center justify-center';
const openButton = `${taskButton} border-2 border-[#55585f] rounded-sm bg-linear-to-br from-white/65 to-white/15`;

function Tray() {
  return (
    <div className="ml-auto h-full flex items-center text-white">
      <span className="mb-2 text-[#f0f0f0]">EN</span>
      <svg width="24" height="20" viewBox="0 0 24 20" className="ml-3" aria-hidden="true">
        <path d="M4 4c3-4 7 2 10-1s5-2 6-2" fill="none" stroke="#6b6b6b" />
        <rect x="1" y="6" width="22" height="12" rx="1" fill="#e2e0da" stroke="#77756f" />
        <path d="M3 9.500h18M3 12.500h18M6 15.500h12" stroke="#77756f" strokeWidth="1.500" strokeDasharray="2 1.500" />
      </svg>
      <button type="button" aria-label="Show hidden icons" className="ml-5">
        <svg width="13" height="9" viewBox="0 0 13 9"><path d="M0 9l6.500-9L13 9z" fill="#f5f5f5" /></svg>
      </button>
      <div className="h-full w-[238px] ml-4 pl-1 flex items-center bg-linear-to-r from-transparent to-[#0a0a0a] to-5%">
        <svg width="26" height="24" viewBox="0 0 26 24" aria-hidden="true">
          <path d="M1 1v22" stroke="#fff" strokeWidth="1.500" />
          <path d="M3 2h9l3 3h7v9H11l-2-3H3z" fill="#fff" />
          <circle cx="17" cy="16" r="7.500" fill="#d8241b" stroke="#8d130e" />
          <path d="M13.500 12.500l7 7M20.500 12.500l-7 7" stroke="#fff" strokeWidth="2.500" />
        </svg>
        <svg width="26" height="26" viewBox="0 0 26 26" fill="none" stroke="#fff" strokeWidth="1.800" className="ml-3" aria-hidden="true">
          <path d="M9 6h14v13H9z" fill="#1a1a1a" />
          <path d="M1 3h7v6H1zM3 0v3M6 0v3M4 9v16M11 24h11M16 19v5" />
        </svg>
        <svg width="24" height="24" viewBox="0 0 24 24" fill="none" stroke="#fff" strokeWidth="1.800" className="ml-3" aria-hidden="true">
          <path d="M1 8h4l6-6v20l-6-6H1z" fill="#fff" />
          <path d="M14 9c2 2 2 4 0 6M17 6c4 4 4 8 0 12M20 4c5 5 5 11 0 16" strokeWidth="1.500" />
        </svg>
        <time className="flex-1 pl-2 text-center leading-[26px]">13:52<br />11.3.2018</time>
        <button type="button" aria-label="Show desktop" className="h-full w-[23px] border-2 border-[#5a5a5a] bg-linear-to-b from-[#555] to-[#0a0a0a] to-40%"></button>
      </div>
    </div>
  );
}

// clouds of the wallpaper that shine through the bar: x, y, rx, ry, colour
const clouds = [
  [880, 20, 60, 20, '#b9bed6'], [1040, 40, 40, 24, '#98a4c6'], [1130, 16, 70, 24, '#bfbdcf'],
  [1240, 44, 70, 24, '#c0bfcf'], [1330, 18, 50, 22, '#9fa9ca'], [1420, 40, 30, 26, '#97a4c7'],
  [1480, 18, 40, 26, '#c1bed0'], [1540, 46, 30, 24, '#c6c3d0'], [1590, 26, 20, 30, '#d3cdd2'],
  [1640, 46, 26, 24, '#b3b0c4'], [1690, 20, 34, 26, '#d0cbd3'], [1760, 44, 40, 22, '#aeafc5'],
  [1830, 18, 46, 24, '#c7c6cf'], [1900, 44, 40, 22, '#a0a5c0'], [2000, 26, 70, 28, '#929ebc'],
  [2110, 46, 60, 20, '#a8aec4'], [2190, 18, 70, 22, '#8b98b7'], [2320, 42, 50, 22, '#c0c1cb'],
  [2430, 14, 60, 18, '#b6b9c5'], [2490, 40, 24, 22, '#cecdcf'], [2545, 48, 28, 22, '#dad7d6'],
];

function SkyBackdrop() {
  return (
    <svg className="absolute inset-0 w-full h-full" viewBox="0 0 3000 62" preserveAspectRatio="none" aria-hidden="true">
      <defs>
        <filter id="cloud" x="-20%" y="-50%" width="140%" height="200%" colorInterpolationFilters="sRGB">
          <feGaussianBlur stdDeviation="16 8" />
        </filter>
      </defs>
      <rect width="3000" height="62" fill="#a9b2cf" />
      <g filter="url(#cloud)">
        <rect x="-40" y="-20" width="240" height="110" fill="#0a0a0a" />
        {clouds.map(([cx, cy, rx, ry, fill]) => (
          <ellipse key={cx} cx={cx} cy={cy} rx={rx} ry={ry} fill={fill} />
        ))}
        <rect x="2615" y="-20" width="200" height="110" fill="#848da0" />
      </g>
      <path d="M0 1h3000" stroke="#5f636e" strokeWidth="2" />
      <path d="M0 3h3000" stroke="#fff" opacity="0.400" />
    </svg>
  );
}

function Taskbar() {
  return (
    <div className="relative h-[62px]">
      <SkyBackdrop />
      <div className="relative h-full pl-[11px] flex items-center">
        <button type="button" aria-label="Start">
          <StartOrb />
        </button>
        <button type="button" aria-label="Internet Explorer" className="ml-[43px]"><IeIcon /></button>
        <button type="button" aria-label="Windows Explorer" className={`${openButton} ml-7 w-[84px]`}><FolderIcon /></button>
        <span className="h-full w-2 border-2 border-l-0 border-[#55585f] rounded-r-sm bg-white/30"></span>
        <button type="button" aria-label="Media Player" className={`${taskButton} w-[100px]`}><MediaIcon /></button>
        <button type="button" aria-label="Chrome" className={`${openButton} w-[93px]`}><ChromeIcon /></button>
        <button type="button" aria-label="Player" className={`${openButton} ml-1 w-[93px]`}><PlayIcon /></button>
        <button type="button" aria-label="Calculator" className={`${taskButton} w-[98px]`}><CalculatorIcon /></button>
        <button type="button" aria-label="Document" className={`${taskButton} w-[98px]`}><PageIcon /></button>
        <button type="button" aria-label="Word" className={`${openButton} w-[86px]`}><WordIcon /></button>
        <span className="h-full w-2 border-2 border-l-0 border-[#55585f] rounded-r-sm bg-white/30"></span>
        <button type="button" aria-label="PowerPoint" className={`${openButton} ml-[3px] w-[86px]`}><PowerPointIcon /></button>
        <span className="h-full w-2 border-2 border-l-0 border-[#55585f] rounded-r-sm bg-white/30"></span>
        <Tray />
      </div>
    </div>
  );
}

export default function App() {
  return (
    <main className="h-screen pt-[234px] pb-[328px] flex flex-col bg-white font-['Open_Sans','Noto_Sans',sans-serif] text-[18px] leading-6">
      <div className="relative">
        <header className="relative h-11 overflow-hidden">
          <GlassBackdrop />
          <CaptionButtons />
        </header>
        <AddressRow />
        {/* blanked-out part of the path */}
        <div className="absolute left-[104px] top-[20px] w-[447px] h-[72px] border-4 border-black rounded-xs bg-white"></div>
      </div>
      <CommandBar />
      <div className="flex-1 min-h-0 flex">
        <NavigationPane />
        <FileList />
        <PreviewPane />
      </div>
      <DetailsPane />
      <Taskbar />
    </main>
  );
}
